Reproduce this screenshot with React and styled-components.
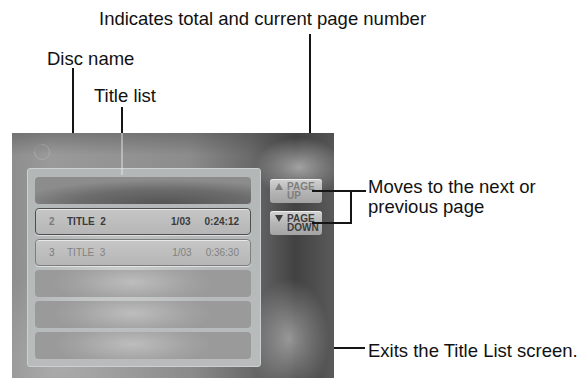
import React from 'react'
import styled, {createGlobalStyle} from 'styled-components'

const GlobalStyle = createGlobalStyle`
body{
    margin:0;
    background:#fff;
    font-family:"Liberation Sans", Arial, sans-serif;
}
`

const Page = styled.div`
position:relative;
width:582px;
height:378px;
overflow:hidden;
background:#fff;
padding-top:133px;
padding-left:12px;
box-sizing:border-box;
`

const Screen = styled.div`
width:322px;
height:245px;
display:flex;
flex-direction:column;
background:
    radial-gradient(ellipse 44px 30px at 89% 14%, rgba(225,225,225,0.6), rgba(225,225,225,0) 100%),
    radial-gradient(ellipse 40px 60px at 86% 84%, rgba(205,205,205,0.6), rgba(205,205,205,0) 100%),
    radial-gradient(ellipse 120px 90px at 15% 95%, rgba(190,190,190,0.45), rgba(190,190,190,0) 100%),
    linear-gradient(to bottom, rgba(70,70,70,0.4) 0px, rgba(70,70,70,0) 22px),
    linear-gradient(to right, #8e8e8e 0%, #9a9a9a 12%, #8c8c8c 55%, #6a6a6a 74%, #424242 88%, #5a5a5a 100%);
`

const ScreenHeader = styled.div`
height:35px;
padding:10px 0 0 21px;
box-sizing:border-box;
`

const ScreenBody = styled.div`
display:flex;
gap:9px;
padding-left:15px;
`

const ListFrame = styled.div`
width:234px;
height:199px;
box-sizing:border-box;
padding:8px 9px 8px 7px;
display:flex;
flex-direction:column;
gap:4px;
border:1px solid #cdd0d0;
border-radius:3px;
background:
    radial-gradient(ellipse 90px 60px at 40% 55%, rgba(220,222,222,0.6), rgba(220,222,222,0) 100%),
    linear-gradient(to bottom, #b4b7b7, #b9bcbc);
`

const Row = styled.div`
height:27px;
flex:none;
box-sizing:border-box;
border-radius:4px;
display:flex;
align-items:center;
padding:0 11px 0 13px;
font-family:"Liberation Sans", Arial, sans-serif;
font-size:10px;
font-weight:${p => p.$active ? 700 : 400};
color:${p => p.$active ? '#3a3a3a' : '#828282'};
border:${p => p.$active ? '1px solid #4e4e4e' : p.$title ? '1px solid #7e7e7e' : 'none'};
box-shadow:${p => p.$title ? 'inset 0 1px 0 rgba(255,255,255,0.6), 0 1px 0 rgba(255,255,255,0.5)' : 'none'};
background:${p => p.$dark
    ? 'radial-gradient(ellipse 70% 90% at 60% 100%, #545454, #6c6c6c 60%, #8c8c8c 100%)'
    : p.$title
        ? 'linear-gradient(to bottom, #c6c6c6, #b6b6b6)'
        : 'radial-gradient(ellipse 80px 24px at 45% 45%, #bdbdbd, #a2a2a2 70%, #9a9a9a 100%)'};
`

const RowNum = styled.span`
width:18px;
color:#7a7a7a;
`

const RowTitle = styled.span`
flex:1;
white-space:pre;
`

const RowPage = styled.span`
margin-right:14px;
`

const Buttons = styled.div`
display:flex;
flex-direction:column;
gap:8px;
margin-top:11px;
`

const PageButton = styled.div`
width:52px;
height:24px;
box-sizing:border-box;
border-radius:3px;
padding:3px 0 0 5px;
display:grid;
grid-template-columns:12px auto;
grid-template-rows:9px 9px;
font-family:"Liberation Sans", Arial, sans-serif;
font-size:10px;
font-weight:700;
line-height:9px;
color:${p => p.$dim ? '#7e7e7e' : '#3c3c3c'};
background:linear-gradient(to bottom, #d2d2d2, #b4b4b4 55%, #a4a4a4);
box-shadow:inset 0 1px 0 rgba(255,255,255,0.6);
`

const Arrow = styled.svg`
margin-top:1px;
`

const Label = styled.div`
position:absolute;
left:${p => p.$x}px;
top:${p => p.$y}px;
font-family:"Liberation Sans", Arial, sans-serif;
font-size:18.5px;
line-height:20px;
color:#111;
white-space:nowrap;
`

const Leader = styled.div`
position:absolute;
left:${p => p.$x}px;
top:${p => p.$y}px;
width:${p => p.$w || 1.5}px;
height:${p => p.$h || 1.5}px;
background:${p => p.$faint ? 'rgba(235,235,235,0.45)' : '#151515'};
`

const titles = [
    {dark: true},
    {num: 2, name: 'TITLE  2', page: '1/03', time: '0:24:12', active: true},
    {num: 3, name: 'TITLE  3', page: '1/03', time: '0:36:30'},
    {},
    {},
    {},
]

const DiscIcon = () => (
    <svg width="18" height="18" viewBox="0 0 18 18">
        <path d="M9 1.5 A7.5 7.5 0 1 1 1.5 9" fill="none" stroke="rgba(200,200,200,0.35)" strokeWidth="1"/>
        <path d="M1.5 9 A7.5 7.5 0 0 1 9 1.5" fill="none" stroke="rgba(200,200,200,0.15)" strokeWidth="1"/>
    </svg>
)

const App = () => {
    return (
        <Page>
            <GlobalStyle/>
            <Screen>
                <ScreenHeader>
                    <DiscIcon/>
                </ScreenHeader>
                <ScreenBody>
                    <ListFrame>
                        {titles.map((t, i) => (
                            <Row key={i} $dark={t.dark} $title={!!t.num} $active={t.active}>
                                {t.num && (
                                    <>
                                        <RowNum>{t.num}</RowNum>
                                        <RowTitle>{t.name}</RowTitle>
                                        <RowPage>{t.page}</RowPage>
                                        <span>{t.time}</span>
                                    </>
                                )}
                            </Row>
                        ))}
                    </ListFrame>
                    <Buttons>
                        <PageButton $dim>
                            <Arrow width="8" height="7" viewBox="0 0 8 7"><path d="M4 0 L8 7 L0 7 Z" fill="#7e7e7e"/></Arrow>
                            <span>PAGE</span>
                            <span/>
                            <span>UP</span>
                        </PageButton>
                        <PageButton>
                            <Arrow width="8" height="7" viewBox="0 0 8 7"><path d="M0 0 L8 0 L4 7 Z" fill="#3c3c3c"/></Arrow>
                            <span>PAGE</span>
                            <span/>
                            <span>DOWN</span>
                        </PageButton>
                    </Buttons>
                </ScreenBody>
            </Screen>

            <Label $x={99} $y={9}>Indicates total and current page number</Label>
            <Label $x={47} $y={49}>Disc name</Label>
            <Label $x={94} $y={86}>Title list</Label>
            <Label $x={368} $y={177}>Moves to the next or<br/>previous page</Label>
            <Label $x={368} $y={341}>Exits the Title List screen.</Label>

            <Leader $x={309} $y={34} $h={99}/>
            <Leader $x={72} $y={68} $h={65}/>
            <Leader $x={121} $y={107} $h={26}/>
            <Leader $x={121} $y={133} $h={42} $faint/>
            <Leader $x={312} $y={190} $w={54}/>
            <Leader $x={350} $y={190} $h={34}/>
            <Leader $x={312} $y={222} $w={40}/>
            <Leader $x={334} $y={347} $w={31}/>
        </Page>
    )
}

export default App
